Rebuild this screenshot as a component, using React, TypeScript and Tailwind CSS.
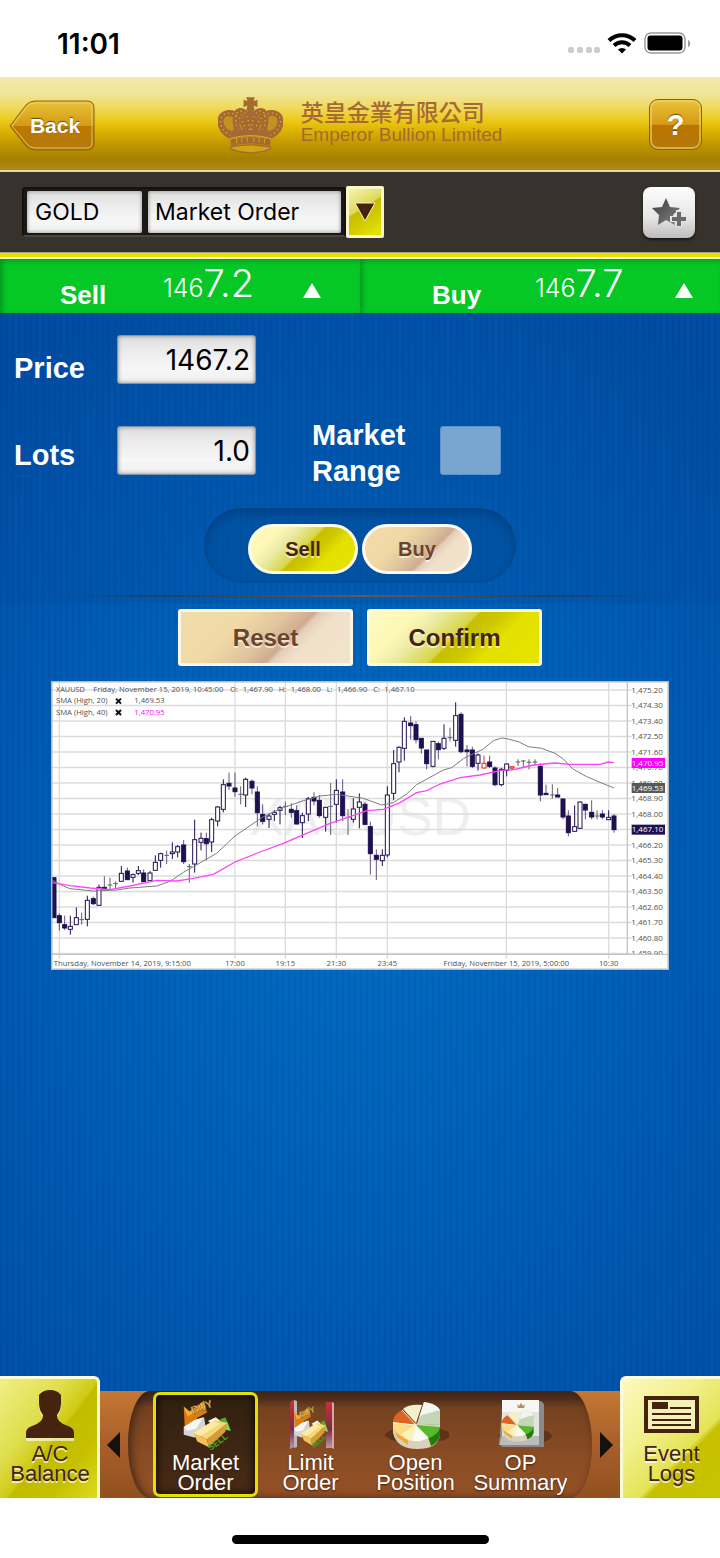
import React, { useState } from 'react';
import { clsx } from 'clsx';

// x, high, body top, body bottom, low, kind (f = filled, h = hollow, d = doji, r = red)
type Candle = [number, number, number, number, number, 'f' | 'h' | 'd' | 'r'];

const CANDLES: Candle[] = [
  [12, 593, 593, 713, 713, 'f'], [28, 700, 707, 728, 752, 'f'], [44, 707, 734, 744, 750, 'f'],
  [61, 707, 739, 748, 764, 'h'], [79, 682, 713, 734, 734, 'h'], [95, 698, 719, 719, 734, 'd'],
  [112, 647, 661, 718, 739, 'h'], [130, 650, 656, 671, 675, 'f'], [147, 614, 622, 676, 676, 'h'],
  [163, 589, 622, 627, 627, 'f'], [180, 593, 615, 615, 630, 'd'], [197, 604, 611, 611, 627, 'd'],
  [214, 558, 580, 604, 604, 'h'], [232, 563, 573, 599, 600, 'f'], [249, 580, 584, 592, 608, 'h'],
  [265, 558, 572, 580, 585, 'h'], [281, 568, 579, 605, 607, 'f'], [300, 573, 579, 602, 602, 'h'],
  [316, 526, 547, 571, 571, 'h'], [332, 518, 521, 541, 563, 'h'], [350, 512, 526, 526, 552, 'd'],
  [367, 487, 516, 521, 537, 'h'], [383, 495, 500, 516, 532, 'h'], [401, 480, 495, 545, 552, 'f'],
  [418, 552, 560, 560, 608, 'd'], [434, 419, 479, 552, 578, 'h'], [453, 458, 475, 487, 511, 'h'],
  [469, 458, 476, 491, 541, 'f'], [485, 413, 419, 486, 516, 'h'], [503, 378, 381, 423, 439, 'h'],
  [520, 298, 314, 388, 397, 'h'], [537, 278, 310, 318, 330, 'f'], [555, 278, 324, 335, 350, 'f'],
  [572, 319, 343, 343, 373, 'd'], [587, 293, 298, 345, 381, 'h'], [606, 298, 304, 324, 343, 'f'],
  [622, 319, 336, 398, 439, 'f'], [638, 373, 403, 424, 433, 'f'], [657, 400, 408, 418, 444, 'h'],
  [673, 390, 397, 403, 423, 'h'], [690, 377, 383, 391, 433, 'h'], [706, 365, 379, 379, 405, 'd'],
  [724, 370, 388, 397, 413, 'f'], [740, 376, 392, 432, 433, 'f'], [757, 398, 407, 428, 474, 'h'],
  [775, 351, 356, 402, 423, 'h'], [792, 337, 352, 363, 376, 'f'], [808, 345, 361, 407, 413, 'f'],
  [827, 381, 382, 412, 455, 'h'], [842, 309, 379, 379, 465, 'd'], [859, 298, 331, 373, 428, 'h'],
  [878, 298, 336, 407, 423, 'f'], [894, 387, 412, 412, 465, 'd'], [910, 355, 387, 418, 428, 'h'],
  [928, 340, 366, 382, 445, 'h'], [945, 366, 373, 433, 433, 'f'], [961, 425, 440, 521, 584, 'f'],
  [979, 508, 526, 538, 600, 'f'], [997, 508, 526, 542, 558, 'h'], [1012, 319, 345, 525, 532, 'h'],
  [1031, 210, 251, 340, 361, 'h'], [1047, 199, 202, 246, 277, 'h'], [1063, 112, 124, 205, 242, 'h'],
  [1082, 108, 129, 137, 179, 'f'], [1098, 124, 134, 179, 190, 'f'], [1114, 175, 175, 204, 221, 'f'],
  [1130, 210, 210, 251, 268, 'f'], [1149, 184, 184, 259, 262, 'h'], [1165, 185, 191, 209, 238, 'f'],
  [1182, 133, 175, 205, 210, 'h'], [1200, 143, 173, 173, 184, 'd'], [1217, 67, 107, 181, 200, 'h'],
  [1233, 97, 103, 215, 220, 'f'], [1251, 195, 210, 215, 259, 'f'], [1267, 200, 210, 259, 264, 'f'],
  [1284, 220, 225, 250, 272, 'h'], [1302, 227, 250, 264, 265, 'r'], [1319, 227, 246, 259, 264, 'f'],
  [1335, 259, 264, 314, 319, 'f'], [1354, 264, 268, 314, 319, 'h'], [1370, 250, 252, 271, 289, 'h'],
  [1386, 258, 260, 264, 272, 'r'], [1404, 238, 246, 246, 258, 'd'], [1420, 240, 243, 243, 264, 'd'],
  [1437, 238, 247, 247, 268, 'd'], [1455, 238, 246, 246, 256, 'd'], [1471, 250, 259, 345, 364, 'f'],
  [1488, 314, 340, 344, 345, 'f'], [1507, 313, 345, 345, 356, 'd'], [1523, 324, 345, 351, 351, 'f'],
  [1539, 355, 357, 411, 418, 'f'], [1555, 391, 408, 458, 469, 'f'], [1574, 376, 440, 454, 455, 'h'],
  [1590, 364, 366, 445, 447, 'h'], [1606, 371, 373, 390, 418, 'f'], [1625, 361, 397, 411, 418, 'f'],
  [1641, 391, 408, 408, 418, 'd'], [1657, 391, 402, 411, 418, 'f'], [1676, 391, 412, 419, 420, 'h'],
  [1692, 402, 408, 449, 458, 'f'],
];

const SMA_20 =
  '6,600 40,618 60,626 130,633 200,630 240,624 320,618 360,604 400,577 430,560 500,520 555,468 600,437 640,410 700,383 760,362 810,348 860,343 940,355 995,375 1030,368 1070,342 1100,314 1180,270 1205,263 1240,236 1300,207 1330,182 1355,174 1370,176 1405,185 1435,200 1475,205 1515,220 1540,237 1570,268 1610,290 1650,307 1692,324';
const SMA_40 =
  '6,608 60,617 120,624 180,629 240,618 320,601 380,603 430,595 490,583 555,546 630,516 700,490 770,460 840,430 900,410 950,392 1000,388 1050,368 1100,338 1130,332 1170,312 1230,293 1290,285 1350,272 1400,267 1450,255 1515,249 1560,253 1650,253 1675,246 1692,248';

const PRICES = [
  '1,475.20', '1,474.30', '1,473.40', '1,472.50', '1,471.60', '1,470.70', '1,469.80', '1,468.90', '1,468.00',
  '1,467.10', '1,466.20', '1,465.30', '1,464.40', '1,463.50', '1,462.60', '1,461.70', '1,460.80', '1,459.90',
];

const TIMES: [number, number, string][] = [
  [28, 217, 'Thursday, November 14, 2019, 9:15:00'],
  [555, 555, '17:00'],
  [706, 706, '19:15'],
  [859, 859, '21:30'],
  [1012, 1012, '23:45'],
  [1369, 1369, 'Friday, November 15, 2019, 5:00:00'],
  [1676, 1676, '10:30'],
];

const TAGS: [number, string, string][] = [
  [249, '1,470.95', '#ff00ff'],
  [324, '1,469.53', '#595959'],
  [449, '1,467.10', '#1f1050'],
];

const YELLOW_GLOSS = 'bg-[linear-gradient(135deg,#fffac4_0%,#fdf8b4_22%,#ececaa_32%,#d6d64a_49%,#c8bf00_51%,#cdc600_60%,#e4e000_72%,#e6e300_100%)]';
const BEIGE_GLOSS = 'bg-[linear-gradient(135deg,#f2dcab_0%,#f0d9a5_32%,#dfc39d_50%,#cfaa92_61%,#e6cfba_64%,#f1e1ca_72%,#f2e3cb_100%)]';
const FIELD = 'bg-[linear-gradient(180deg,#dedede_0%,#ebebeb_30%,#f7f7f7_70%,#efefef_100%)] text-black shadow-[inset_0_0_4px_#8a8a8a]';

export default function App() {
  return (
    <div className="flex min-h-screen w-full flex-col bg-white font-['Liberation_Sans',Arial,sans-serif]">
      <StatusBar />
      <Header />
      <ProductBar />
      <Quotes />
      <main className="flex flex-1 flex-col bg-[repeating-linear-gradient(90deg,rgba(0,20,80,0.07)_0px,rgba(0,20,80,0.07)_2px,transparent_2px,transparent_6px),radial-gradient(ellipse_75%_58%_at_50%_48%,#006cc4_0%,#005fb6_50%,#0050a7_100%)]">
        <OrderForm />
        <div className="px-[51px] pt-[15px]">
          <Chart />
        </div>
        <BottomNav />
      </main>
      <div className="flex h-[60px] justify-center pt-[37px]">
        <div className="h-[9px] w-[257px] rounded-full bg-black" />
      </div>
    </div>
  );
}

function StatusBar() {
  return (
    <div className="flex h-[77px] items-start justify-between pt-[27px] pr-[29px] pl-[57px]">
      <span className="font-['Inter',sans-serif] text-[28px] leading-[34px] font-semibold text-black">11:01</span>
      <svg width="124" height="34" viewBox="567 27 124 34" aria-label="Wi-Fi, battery full">
        {[570, 579, 588, 596].map((x) => (
          <rect key={x} x={x - 2} y="47" width="6" height="6" rx="2" fill="#cbcbcb" />
        ))}
        <g fill="none" stroke="#000" strokeWidth="4">
          <path d="M609 40.5a18.500 18.500 0 0 1 26 0" />
          <path d="M614 45.500a11.500 11.500 0 0 1 16 0" />
        </g>
        <path d="M618 49.500a5.800 5.800 0 0 1 8 0l-4 4z" fill="#000" />
        <rect x="645" y="33" width="40" height="20" rx="6" fill="none" stroke="#9b9b9b" strokeWidth="1.500" />
        <rect x="647.500" y="35.500" width="35" height="15" rx="3" fill="#000" />
        <path d="M688 40c3 1 3 6 0 7z" fill="#9b9b9b" />
      </svg>
    </div>
  );
}

function Header() {
  return (
    <header className="grid h-[95px] grid-cols-[1fr_auto_1fr] items-start border-b-2 border-[#e4d9a0] bg-[linear-gradient(180deg,#f4e9a8_0%,#f0e69e_16%,#efdb62_32%,#ecca1c_46%,#dfb703_56%,#c59c00_70%,#a68000_88%,#ab8a1c_100%)] px-[9px]">
      <button className="relative mt-[23px] flex h-[51px] w-[86px] items-center justify-center pl-[6px]">
        <svg className="absolute inset-0" width="86" height="51" viewBox="0 0 86 51" aria-hidden="true">
          <defs>
            <linearGradient id="back" x1="0" y1="0" x2="0" y2="1">
              <stop offset="0" stopColor="#e9c33a" />
              <stop offset=".5" stopColor="#d59a14" />
              <stop offset=".51" stopColor="#bd7800" />
              <stop offset="1" stopColor="#b27a0c" />
            </linearGradient>
          </defs>
          <path d="M1 26 17 5q4-4 9-4h52q7 0 7 7v35q0 7-7 7H26q-5 0-9-4z" fill="url(#back)" stroke="#86640f" />
          <path d="M3 26 18 7q3-4 8-4h52q5 0 5 5v35q0 5-5 5H26q-5 0-8-4z" fill="none" stroke="#f0d576" strokeOpacity=".8" />
        </svg>
        <span className="relative text-[21px] font-bold text-white [text-shadow:0_-1px_1px_#6b4a00]">Back</span>
      </button>
      <div className="mt-[19px] flex gap-[18px] text-[#a56a33]">
        <Crown />
        <div className="pt-[2px] whitespace-nowrap">
          <p className="font-['Noto_Sans_CJK_TC',sans-serif] text-[23px] leading-[26px] font-medium">英皇金業有限公司</p>
          <p className="text-[19px] leading-[21px]">Emperor Bullion Limited</p>
        </div>
      </div>
      <button
        aria-label="Help"
        className="mt-[22px] mr-[9px] h-[51px] w-[53px] justify-self-end rounded-[9px] border border-[#86640f] bg-[linear-gradient(180deg,#e9c33a_0%,#d59a14_50%,#bd7300_51%,#b27a0c_100%)] text-[29px] leading-[48px] font-bold text-white shadow-[inset_0_0_0_2px_rgba(240,213,118,0.6)] [text-shadow:0_-1px_1px_#6b4a00]"
      >
        ?
      </button>
    </header>
  );
}

function Crown() {
  const half = (
    <>
      <path d="M700 410C648 392 646 340 682 337C706 336 728 356 738 402" />
      <path d="M716 400C700 372 698 334 716 331C734 330 744 352 746 398" />
    </>
  );
  return (
    <svg width="65" height="58" viewBox="650 286 196 174" aria-hidden="true">
      <path d="M735 289h26l-4 12 12-4v22l-12-4 4 14h-26l4-14-12 4v-22l12 4z" fill="#a56a33" />
      <path d="M690 404q-32-22-24-48 30-24 82-8 52-16 82 8 8 26-24 48-58-16-116 0z" fill="#c4921e" />
      <g fill="none" stroke="#a56a33" strokeWidth="19">
        {half}
        <g transform="matrix(-1 0 0 1 1496 0)">{half}</g>
        <path d="M748 326v74" />
      </g>
      <g fill="none" stroke="#d9ad24" strokeWidth="4" strokeDasharray="4 9">
        {half}
        <g transform="matrix(-1 0 0 1 1496 0)">{half}</g>
      </g>
      <path d="M678 384l14 8 12-12 14 14 14-14 16 12 16-12 14 14 14-14 12 12 14-8-12 32q-58-16-116 0z" fill="#a56a33" />
      <path d="M687 418q61-18 122 0l-3 18q-58-14-116 0z" fill="#a56a33" />
      <path d="M687 414q61-18 122 0" fill="none" stroke="#d9b616" strokeWidth="3" />
      <path d="M706 414v14M722 411v14M738 410v14M758 410v14M774 411v14M790 414v14" stroke="#cfa90f" strokeWidth="3" />
      <path d="M688 440q60-14 120 0v6q-60 22-120 0z" fill="#cfa514" stroke="#a56a33" strokeWidth="4" />
    </svg>
  );
}

function ProductBar() {
  return (
    <div className="bg-[#37332c]">
      <div className="flex h-[80px] items-center justify-between pr-[25px] pl-[22px]">
        <div className="flex items-center">
          <div className="flex h-[50px] items-center gap-[6px] rounded-[3px] border-2 border-[#14120f] border-b-[#4a4640] bg-[#1b1915] px-[3px]">
            <input
              aria-label="Product"
              defaultValue="GOLD"
              className={clsx("h-[42px] w-[115px] rounded-[2px] pl-[8px] font-['Inter',sans-serif] text-[23px]", FIELD)}
            />
            <select
              aria-label="Order type"
              className={clsx("h-[42px] w-[193px] appearance-none rounded-[2px] pl-[7px] font-['Inter',sans-serif] text-[23px]", FIELD)}
            >
              <option>Market Order</option>
            </select>
          </div>
          <button
            aria-label="Choose order type"
            className="flex h-[52px] w-[38px] items-center justify-center rounded-[2px] border-[3px] border-[#fdf6c9] bg-[linear-gradient(148deg,#f6f4b0_0%,#dcda5c_40%,#c6bd00_44%,#cfc900_62%,#e4e000_90%)]"
          >
            <svg width="22" height="20" viewBox="0 0 22 20">
              <path d="M1 1h20L11 19z" fill="#45230f" stroke="#fff3b0" strokeWidth="1" />
            </svg>
          </button>
        </div>
        <button
          aria-label="Add to favourites"
          className="flex h-[51px] w-[52px] items-center justify-center rounded-[8px] bg-[linear-gradient(180deg,#fdfdfd_0%,#e6e6e6_60%,#bdbdbd_100%)] shadow-[0_2px_3px_#1a1815]"
        >
          <svg width="36" height="32" viewBox="0 0 36 32">
            <defs>
              <linearGradient id="star" x1="0" y1="0" x2="1" y2="1">
                <stop offset="0" stopColor="#3c3c3c" />
                <stop offset="1" stopColor="#858585" />
              </linearGradient>
            </defs>
            <path d="m15 2 4 9 10 1-7 7 2 10-9-5-8 5 1-10-7-7 10-1z" fill="url(#star)" />
            <path d="M28 14v17M19 23h17" stroke="#e4e4e4" strokeWidth="6" />
            <path d="M28 16v14M21 23h14" stroke="#6a6a6a" strokeWidth="4" />
          </svg>
        </button>
      </div>
      <div className="h-[7px] border-t border-b-2 border-t-[#a8a58f] border-b-[#f2f1cc] bg-[#e6e200]" />
    </div>
  );
}

function Quotes() {
  return (
    <div className="grid h-[54px] grid-cols-2 bg-[#05c826]">
      <Quote label="Sell" small="146" big="7.2" className="pl-[60px]" />
      <Quote label="Buy" small="146" big="7.7" className="pl-[72px]" />
    </div>
  );
}

function Quote({ label, small, big, className }: { label: string, small: string, big: string, className: string }) {
  return (
    <div className={clsx('flex items-start text-white shadow-[inset_3px_2px_5px_#049a1e]', className)}>
      <span className="w-[103px] pt-[21px] text-[26px] leading-[30px] font-bold">{label}</span>
      <span className="w-[140px] pt-[2px] font-['Inter',sans-serif] leading-[44px] font-light">
        <span className="text-[25px]">{small}</span>
        <span className="text-[38px]">{big}</span>
      </span>
      <svg className="mt-[24px]" width="18" height="16" viewBox="0 0 18 16" aria-label="up">
        <path d="M9 0 18 15H0z" fill="#fff" />
      </svg>
    </div>
  );
}

function OrderForm() {
  const [side, setSide] = useState<'Sell' | 'Buy'>('Sell');
  const field = clsx("h-[49px] w-[139px] rounded-[3px] border border-[#7d95b3] pr-[5px] text-right font-['Inter',sans-serif] text-[28px]", FIELD);
  const label = 'text-[29px] leading-[36px] font-bold text-white';

  return (
    <form onSubmit={(e) => e.preventDefault()}>
      <div className="flex flex-col items-center bg-[#003c8c]/15 pt-[22px]">
        <div className="w-full pl-[14px]">
          <div className="flex h-[82px] items-start">
            <label htmlFor="price" className={clsx('w-[103px] pt-[15px]', label)}>Price</label>
            <input id="price" defaultValue="1467.2" className={field} />
          </div>
          <div className="flex h-[72px] items-start">
            <label htmlFor="lots" className={clsx('w-[103px] pt-[20px]', label)}>Lots</label>
            <input id="lots" defaultValue="1.0" className={clsx('mt-[9px]', field)} />
            <label htmlFor="range" className={clsx('ml-[56px] w-[128px]', label)}>Market Range</label>
            <input id="range" type="checkbox" className="mt-[9px] h-[49px] w-[61px] appearance-none rounded-[3px] border border-[#5f93c9] bg-[#79a5d1]" />
          </div>
        </div>
        <div className="mt-[19px] flex h-[75px] w-[312px] items-center justify-center gap-1 rounded-full bg-[#004c98]/50 pt-[6px] shadow-[inset_0_4px_10px_#00407f]">
          <button type="button" onClick={() => setSide('Sell')} aria-pressed={side === 'Sell'} className={clsx('h-[50px] w-[110px] rounded-full border-[3px] border-[#fffbe0] text-[20px] font-bold text-[#45230f] [text-shadow:0_2px_0_rgba(255,255,255,0.6)]', YELLOW_GLOSS)}>
            Sell
          </button>
          <button type="button" onClick={() => setSide('Buy')} aria-pressed={side === 'Buy'} className={clsx('h-[50px] w-[110px] rounded-full border-[3px] border-[#fffbf0] text-[20px] font-bold text-[#6b452b] [text-shadow:0_2px_0_rgba(255,255,255,0.6)]', BEIGE_GLOSS)}>
            Buy
          </button>
        </div>
        <div className="mt-[12px] mb-[7px] h-[2px] w-[85%] bg-[linear-gradient(90deg,transparent,#1c4468_20%,#69565a_50%,#1c4468_80%,transparent)]" />
      </div>
      <div className="flex justify-center gap-[14px] pt-[5px]">
        <button type="reset" className={clsx('h-[57px] w-[175px] rounded-[3px] border-[3px] border-[#fdf7e6] text-[24px] font-bold text-[#6b452b] [text-shadow:0_2px_0_rgba(255,255,255,0.6)]', BEIGE_GLOSS)}>
          Reset
        </button>
        <button type="submit" className={clsx('h-[57px] w-[175px] rounded-[3px] border-[3px] border-[#fffbd0] text-[24px] font-bold text-[#45230f] [text-shadow:0_2px_0_rgba(255,255,255,0.6)]', YELLOW_GLOSS)}>
          Confirm
        </button>
      </div>
    </form>
  );
}

function Chart() {
  return (
    <svg className="block w-full bg-white" viewBox="3 3 1854 867" fontFamily="'Open Sans', 'Noto Sans', sans-serif" fontSize="22" fill="#505050">
      <text x="930" y="465" fontSize="160" textAnchor="middle" fill="#efefef" fontFamily="'Liberation Sans', Arial, sans-serif">XAUUSD</text>
      <g stroke="#dcdcdc" strokeWidth="4">
        {PRICES.map((p, i) => (
          <path key={p} d={`M6 ${30 + i * 46.5}H1745`} />
        ))}
        {TIMES.map(([x]) => (
          <path key={x} d={`M${x} 6V836`} />
        ))}
      </g>
      {CANDLES.map(([x, high, top, bottom, low, kind]) => {
        const ink = kind === 'r' ? '#ee2222' : '#1f1050';
        if (kind === 'd') {
          return <path key={x} d={`M${x} ${high}V${low}M${x - 7} ${top}H${x + 7}`} stroke="#5f5f68" strokeWidth="3" />;
        }
        return (
          <g key={x} stroke={ink} strokeWidth="3">
            <path d={`M${x} ${high}V${top}M${x} ${bottom}V${low}`} strokeOpacity={kind === 'f' ? 0.7 : 1} />
            <rect x={x - 6} y={top} width="12" height={bottom - top} fill={kind === 'f' ? ink : '#fff'} />
          </g>
        );
      })}
      <polyline points={SMA_20} fill="none" stroke="#7d7d7d" strokeWidth="3" />
      <polyline points={SMA_40} fill="none" stroke="#ff44ff" strokeWidth="4" />

      <text x="18" y="35">XAUUSD</text>
      <text x="130" y="35" fontSize="23">Friday, November 15, 2019, 10:45:00</text>
      <text x="541" y="35">O:</text>
      <text x="578" y="35" fontSize="23">1,467.90</text>
      <text x="686" y="35">H:</text>
      <text x="722" y="35" fontSize="23">1,468.00</text>
      <text x="830" y="35">L:</text>
      <text x="861" y="35" fontSize="23">1,466.90</text>
      <text x="970" y="35">C:</text>
      <text x="1003" y="35" fontSize="23">1,467.10</text>
      <text x="18" y="70" fontSize="23">SMA  (High, 20)</text>
      <text x="253" y="70" fontSize="23">1,469.53</text>
      <text x="18" y="105" fontSize="23">SMA  (High, 40)</text>
      <text x="253" y="105" fontSize="23" fill="#ff00ff">1,470.95</text>
      <path d="m198 56 15 15m0-15-15 15M198 90l15 15m0-15-15 15" stroke="#111" strokeWidth="6" />

      {PRICES.map((p, i) => (
        <text key={p} x="1744" y={38 + i * 46.5} fontSize="24">{p}</text>
      ))}
      <rect x="1734" y="823" width="120" height="44" fill="#fff" />
      <path d="M1732 6V823M6 823H1855" stroke="#c4c4c4" strokeWidth="4" />
      {TAGS.map(([y, text, color]) => (
        <g key={text}>
          <rect x="1745" y={y - 15} width="100" height="30" fill={color} />
          <text x="1745" y={y + 8} fontSize="24" fill="#fff">{text}</text>
        </g>
      ))}
      {TIMES.map(([, x, text]) => (
        <text key={x} x={x} y="857" fontSize="23" textAnchor="middle">{text}</text>
      ))}
      <rect x="5" y="5" width="1850" height="863" fill="none" stroke="#b4bac4" strokeWidth="5" />
    </svg>
  );
}

const NAV_LABEL = 'text-[22px] leading-[20px]';

function BottomNav() {
  return (
    <nav className="mt-auto flex items-end">
      <a href="#balance" className="flex h-[122px] w-[100px] flex-col items-center rounded-tr-[6px] border-t-[3px] border-r-[3px] border-[#fffbd8] bg-[linear-gradient(128deg,#f0ef86_0%,#dfde4c_35%,#cfca14_52%,#c2bc00_54%,#c6c000_75%,#dedb1c_100%)] pt-[11px] pl-[3px] text-[#45230f]">
        <svg width="48" height="51" viewBox="0 0 48 51" aria-hidden="true">
          <path d="M0 50v-6q0-5 6-7 12-4 11-11-4-5-4-12V6q4-6 11-6t11 6v8q0 7-4 12-1 7 11 11 6 2 6 7v6z" fill="#fff" fillOpacity=".6" transform="translate(0 1)" />
          <path d="M0 48v-5q0-5 6-7 12-4 11-11-4-5-4-12V5q4-5 11-5t11 5v8q0 7-4 12-1 7 11 11 6 2 6 7v5z" fill="#45230f" />
        </svg>
        <span className={clsx('mt-[3px] text-center [text-shadow:0_2px_0_rgba(255,255,255,0.7)]', NAV_LABEL)}>A/C<br />Balance</span>
      </a>
      <div className="flex h-[107px] min-w-0 flex-1 items-center justify-between bg-[linear-gradient(180deg,#c57832_0%,#a75f2c_50%,#92501f_100%)] px-[7px]">
        <button aria-label="Previous">
          <svg width="13" height="26" viewBox="0 0 13 26"><path d="M13 0v26L0 13z" fill="#15110c" /></svg>
        </button>
        <div className="mx-2 h-full min-w-0 flex-1 rounded-[22px/53px] bg-[linear-gradient(180deg,#472a1a_0%,#512f1b_8%,#73421f_16%,#8a4c24_60%,#965126_100%)] px-[25px] shadow-[inset_3px_0_9px_rgba(40,25,15,0.7)]">
          <div className="grid h-full grid-cols-[repeat(4,105px)] overflow-hidden">
            <NavItem href="#market" icon={<OrderIcon />} lines={['Market', 'Order']} active />
            <NavItem href="#limit" icon={<LimitIcon />} lines={['Limit', 'Order']} />
            <NavItem href="#position" icon={<PieIcon />} lines={['Open', 'Position']} />
            <NavItem href="#summary" icon={<SummaryIcon />} lines={['OP', 'Summary']} />
          </div>
        </div>
        <button aria-label="Next">
          <svg width="13" height="26" viewBox="0 0 13 26"><path d="M0 0v26l13-13z" fill="#15110c" /></svg>
        </button>
      </div>
      <a href="#logs" className="flex h-[122px] w-[100px] flex-col items-center rounded-tl-[6px] border-t-[3px] border-l-[3px] border-[#fffbd8] bg-[linear-gradient(135deg,#fdf8c0_0%,#f1f08c_35%,#e4e356_62%,#c6c000_66%,#c9c400_100%)] pt-[17px] text-[#45230f]">
        <svg width="55" height="38" viewBox="0 0 55 38" aria-hidden="true">
          <rect x="2" y="2" width="51" height="33" fill="#f4f0b8" stroke="#45230f" strokeWidth="4" />
          <path d="M8 6h16v7H8z" fill="#45230f" />
          <path d="M26 12h21M8 18h39M8 24h39M8 29h39" stroke="#45230f" strokeWidth="2" />
        </svg>
        <span className={clsx('mt-[10px] text-center [text-shadow:0_2px_0_rgba(255,255,255,0.7)]', NAV_LABEL)}>Event<br />Logs</span>
      </a>
    </nav>
  );
}

function NavItem({ href, icon, lines, active }: { href: string, icon: React.ReactNode, lines: string[], active?: boolean }) {
  return (
    <a
      href={href}
      className={clsx(
        'my-[1px] flex min-w-0 flex-col items-center rounded-[7px] border-[3px] pt-[1px] text-white',
        active ? 'border-[#e3df00] bg-[linear-gradient(180deg,#30200f,#4a2a17)] shadow-[inset_0_0_8px_#000]' : 'border-transparent'
      )}
    >
      {icon}
      <span className={clsx('text-center [text-shadow:0_1px_2px_#3a1f0c]', NAV_LABEL)}>
        {lines[0]}<br />{lines[1]}
      </span>
    </a>
  );
}

// buy / sell arrows around two ingots, also used inside the limit icon
function Ingots() {
  return (
    <>
      <path d="M3 11 9 16 24 5 27 17 16 23 24 26 4 32z" fill="#dd7c14" />
      <path d="M3 11 9 16 24 5 25 12 7 21z" fill="#f6ac35" />
      <path d="M3 32 14 25 24 22 26 34 14 43 3 40z" fill="#d4d4d2" />
      <path d="M3 32 14 25 23 22 16 34 6 36z" fill="#f7f7f5" />
      <path d="M28 26 36 22 44 28 37 33z" fill="#fbf5df" />
      <path d="M41 24l5-2 6 14-7-1-13 15-3 4-1-8z" fill="#4fae28" />
      <path d="M43 29l5-2 3 9-6-2z" fill="#8ed84e" />
      <path d="M13 38 36 25 48 28 27 45z" fill="#f7d775" />
      <path d="M13 38 33 26 40 29 20 42z" fill="#fdeaa6" />
      <path d="M13 38 27 45 29 53 17 47z" fill="#f3c25c" />
      <path d="M27 45 48 28 46 37 29 53z" fill="#d99a38" />
      <text x="12" y="19" fontSize="11" fontWeight="bold" fill="#f8dc84" stroke="#6d4309" strokeWidth=".5" transform="rotate(-20 12 19)">BUY</text>
      <text x="31" y="57" fontSize="9" fontWeight="bold" fill="#46a424" transform="rotate(-38 31 57)">SELL</text>
    </>
  );
}

function OrderIcon() {
  return (
    <svg className="shrink-0 overflow-visible" width="52" height="57" viewBox="0 0 52 59" aria-hidden="true">
      <Ingots />
    </svg>
  );
}

function LimitIcon() {
  return (
    <svg className="shrink-0" width="48" height="57" viewBox="0 0 48 57" aria-hidden="true">
      <defs>
        <linearGradient id="bar" x1="0" y1="0" x2="0" y2="1">
          <stop offset="0" stopColor="#c8303c" />
          <stop offset=".6" stopColor="#7d2c3c" />
          <stop offset="1" stopColor="#b99aa8" />
        </linearGradient>
      </defs>
      <path d="M3 6 7 4v47l-4 2z" fill="url(#bar)" />
      <path d="M7 4l3 1v46l-3 1z" fill="#b9b9bd" />
      <path d="M39 6h6v46h-6z" fill="url(#bar)" />
      <path d="M45 6l2 1v46l-2-1z" fill="#d7a5ac" />
      <g transform="translate(5 7) scale(.7 .8)">
        <Ingots />
      </g>
    </svg>
  );
}

function Pie() {
  return (
    <>
      <path d="M1 21v11q4 16 24 16 20 0 23-13V24z" fill="#d9d2b8" />
      <path d="M1 22 5 36 16 44V32z" fill="#efa83a" />
      <path d="M34 30 48 26v9q-2 7-9 10z" fill="#247c10" />
      <path d="M24 24 10 9Q1 14 1 21z" fill="#dd6424" />
      <path d="M24 24 1 21v4q2 7 8 10z" fill="#fbdb86" />
      <path d="M24 24 9 34q4 5 12 6z" fill="#fdf0bb" />
      <path d="M24 24 20 40q12 1 17-4z" fill="#fbfbf4" />
      <path d="M24 24 37 37q10-4 11-11z" fill="#56b82c" />
      <path d="M24 22 11 8Q17 3 30 4z" fill="#f4f0cb" />
      <path d="M25 23 32 1q13 2 16 8v15z" fill="#c3d6b5" />
      <path d="M32 1q13 2 16 8L30 14l-3 3z" fill="#f4f5f1" />
      <path d="M24 24 10 9M24 24 1 22M24 24 9 34M24 24 20 40" stroke="#fff5cf" strokeWidth="1" />
    </>
  );
}

function PieIcon() {
  return (
    <svg className="shrink-0" width="66" height="57" viewBox="-9 -5 66 57" aria-hidden="true">
      <ellipse cx="26" cy="34" rx="33" ry="8" fill="#4a2610" fillOpacity=".6" />
      <Pie />
    </svg>
  );
}

function SummaryIcon() {
  return (
    <svg className="shrink-0" width="66" height="57" viewBox="-9 0 66 57" aria-hidden="true">
      <ellipse cx="28" cy="40" rx="27" ry="8" fill="#4a2610" fillOpacity=".6" />
      <path d="M6 5h38l3 3v43H5l-3-5z" fill="#8b8b8b" />
      <path d="M5 4h37v45H5z" fill="#e3e3e3" />
      <path d="M5 4h37v12H5z" fill="#f6f6f6" />
      <path d="m20 8 2 2 2-3 2 3 2-2-1 4h-6z" fill="#b98a5e" />
      <path d="M5 40h37v9H2z" fill="#bcbcbc" />
      <g transform="translate(4 13) scale(.68)">
        <Pie />
      </g>
    </svg>
  );
}
